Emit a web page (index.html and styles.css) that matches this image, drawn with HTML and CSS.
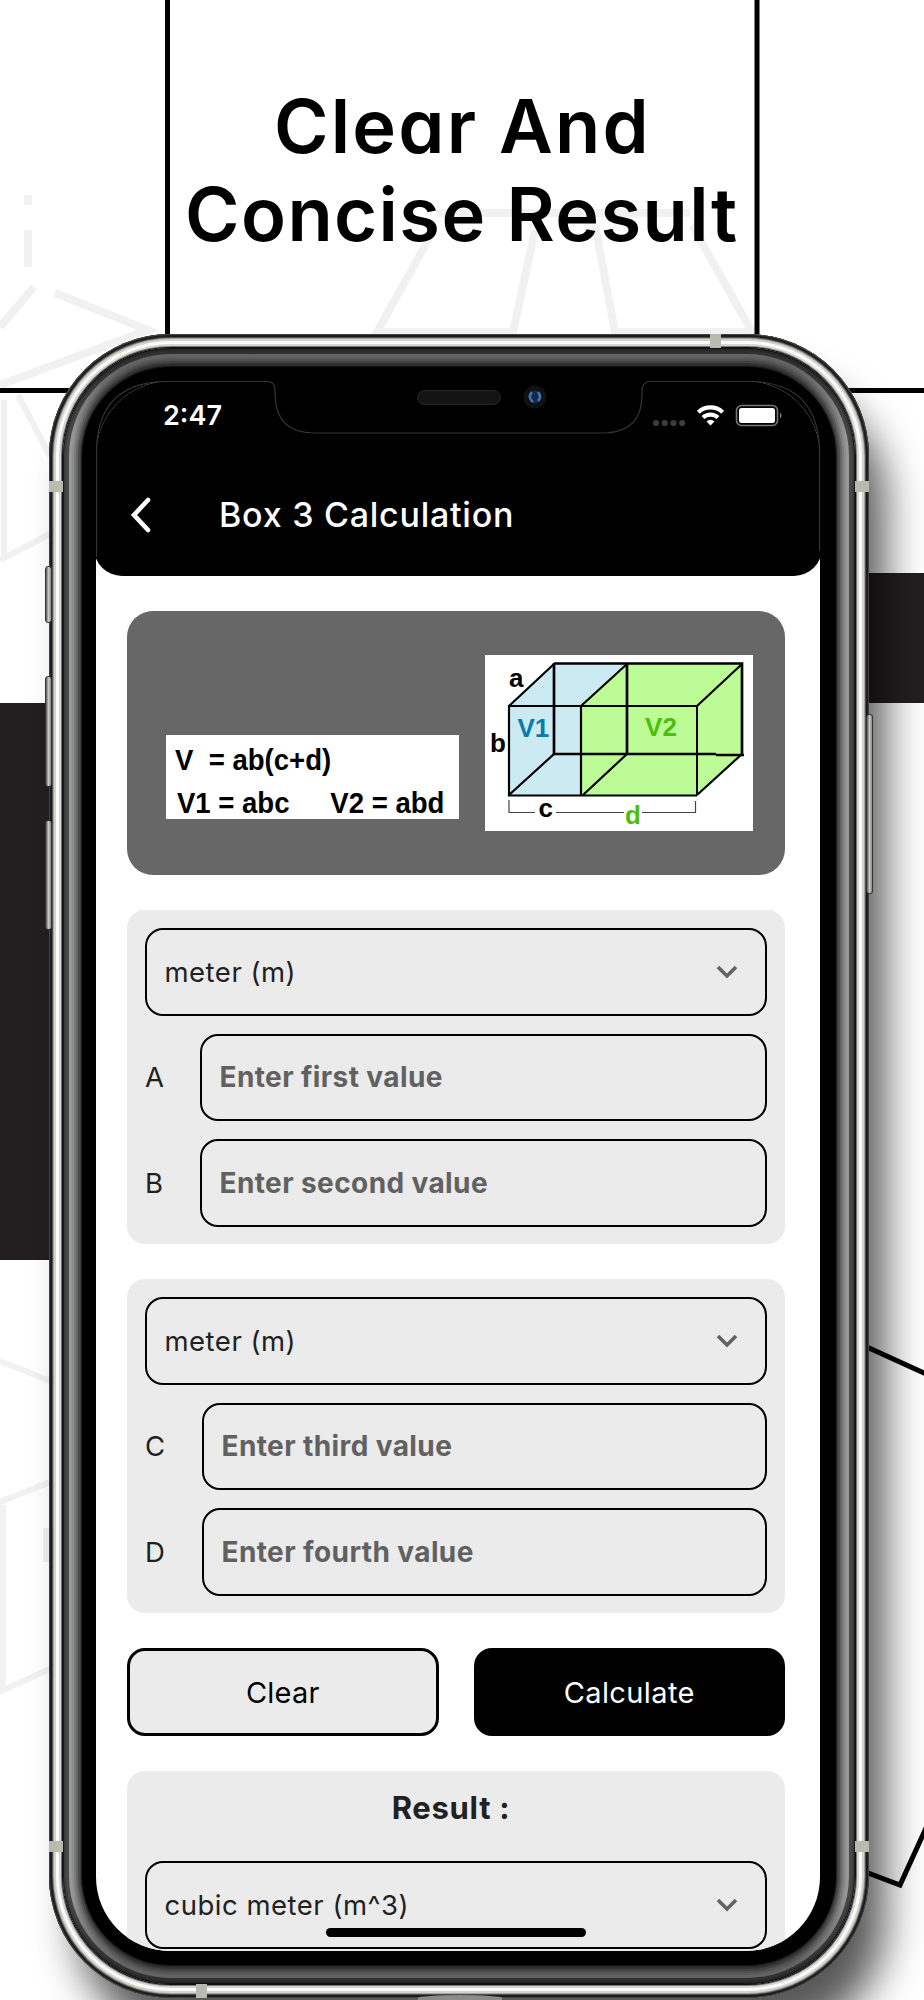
FILE: index.html
```html
<!DOCTYPE html>
<html lang="en">
<head>
    <meta charset="UTF-8">
    <meta name="viewport" content="width=device-width, initial-scale=1.0">
    <title>Box 3 Calculation</title>
    <link rel="stylesheet" href="styles.css">
</head>
<body>
    <div class="poster">
        <!-- background shapes behind the phone -->
        <svg class="backdrop" width="924" height="2000" viewBox="0 0 924 2000">
            <g fill="none" stroke="#f1f1f1" stroke-width="8">
                <path d="M437 213H690M432 233L377 332H513L535 230M595 225L615 332H752L692 225"/>
                <path d="M28 195V205M28 230V267M34 287L0 327M55 293L148 330L0 385"/>
                <path d="M4 400V560M0 560L50 534M18 395L50 456" stroke-width="6"/>
                <path d="M0 1361L50 1381M0 1502L50 1482M3 1505V1690L50 1669M46 1528V1562" stroke-width="6"/>
            </g>
            <path d="M167.5 0V345M757 0V345M0 390.5H924" fill="none" stroke="#000" stroke-width="5"/>
            <rect x="0" y="703" width="60" height="557" fill="#231f20"/>
            <rect x="860" y="573" width="64" height="130" fill="#231f20"/>
        </svg>

        <h1 class="headline">
            <span class="line-one">Clear And</span>
            <span class="line-two">Concise Result</span>
        </h1>

        <div class="phone">
            <span class="key key-mute"></span>
            <span class="key key-up"></span>
            <span class="key key-down"></span>
            <span class="key key-power"></span>
            <span class="band band-lt"></span>
            <span class="band band-rt"></span>
            <span class="band band-lb"></span>
            <span class="band band-rb"></span>
            <span class="band band-top"></span>
            <span class="band band-bottom"></span>
            <span class="port"></span>

            <div class="bezel">
                <div class="screen">
                    <header class="app-header">
                        <div class="status-bar">
                            <span class="time">2:47</span>
                            <svg class="status-icons" width="132" height="24" viewBox="0 0 132 24">
                                <g fill="#3c3c3c">
                                    <circle cx="4" cy="19" r="3.1"/><circle cx="12.7" cy="19" r="3.1"/>
                                    <circle cx="21.5" cy="19" r="3.1"/><circle cx="30.2" cy="19" r="3.1"/>
                                </g>
                                <g fill="none" stroke="#fff" stroke-width="4.2">
                                    <path d="M46.3 8.2A18 18 0 0 1 70.7 8.2"/>
                                    <path d="M51 13.5A11 11 0 0 1 66 13.5"/>
                                </g>
                                <path d="M54.5 17.4A6 6 0 0 1 62.5 17.4L58.5 21.5Z" fill="#fff"/>
                                <rect x="84.5" y="1.5" width="41" height="20" rx="5" fill="none" stroke="#777" stroke-width="1.6"/>
                                <rect x="87" y="4" width="36" height="15" rx="2.5" fill="#fff"/>
                                <path d="M128 8.5Q131 11.5 128 14.5Z" fill="#888"/>
                            </svg>
                        </div>
                        <div class="title-bar">
                            <svg class="back" width="24" height="38" viewBox="0 0 24 38">
                                <path d="M19 4L5 19L19 34" fill="none" stroke="#fff" stroke-width="4.6" stroke-linecap="round"/>
                            </svg>
                            <h2>Box 3 Calculation</h2>
                        </div>
                    </header>

                    <main class="content">
                        <section class="figure-card">
                            <div class="formula">
                                <p>V&nbsp; = ab(c+d)</p>
                                <p class="row-two"><span>V1 = abc</span><span>V2 = abd</span></p>
                            </div>
                            <svg class="diagram" width="268" height="176" viewBox="0 0 268 176">
                                <rect width="268" height="176" fill="#fff"/>
                                <path d="M24 51L69 9H142L96 51V140H24Z" fill="#cbeaf2"/>
                                <path d="M96 51L142 9H257V100L212 140H96Z" fill="#bdfb97"/>
                                <g fill="none" stroke="#000">
                                    <path d="M24 51H212V140" stroke-width="2"/>
                                    <path d="M24 50V140.500H212M96 51V140" stroke-width="2.2"/>
                                    <path d="M69 8.500H257V99M69 8V99H231M231 100H259M142 9V99" stroke-width="2.7"/>
                                    <path d="M24 51L69 9M96 51L142 9M212 51L257 9M24 140L69 99M98 140L142 99M212 140L257 99" stroke-width="2.2"/>
                                    <path d="M24 145V157.500H50M71 157.500H139M157 157.500H210.500V146" stroke-width="1.200" stroke="#444"/>
                                </g>
                                <g class="diagram-text">
                                    <text x="24" y="32">a</text>
                                    <text x="5" y="97">b</text>
                                    <text x="53.500" y="161.500">c</text>
                                    <text x="140" y="169" fill="#4abf0c">d</text>
                                    <text x="32.500" y="82" fill="#087bae">V1</text>
                                    <text x="160" y="80.500" fill="#4abf0c" textLength="32">V2</text>
                                </g>
                            </svg>
                        </section>

                        <section class="panel">
                            <div class="select">
                                <span class="unit">meter (m)</span>
                                <svg class="chevron" width="24" height="16" viewBox="0 0 24 16"><path d="M3 3L12 12L21 3"/></svg>
                            </div>
                            <div class="field">
                                <label class="label-ab">A</label>
                                <div class="input first">Enter first value</div>
                            </div>
                            <div class="field">
                                <label class="label-ab">B</label>
                                <div class="input second">Enter second value</div>
                            </div>
                        </section>

                        <section class="panel">
                            <div class="select">
                                <span class="unit">meter (m)</span>
                                <svg class="chevron" width="24" height="16" viewBox="0 0 24 16"><path d="M3 3L12 12L21 3"/></svg>
                            </div>
                            <div class="field">
                                <label class="label-cd">C</label>
                                <div class="input third">Enter third value</div>
                            </div>
                            <div class="field">
                                <label class="label-cd">D</label>
                                <div class="input fourth">Enter fourth value</div>
                            </div>
                        </section>

                        <div class="actions">
                            <button class="btn btn-clear">Clear</button>
                            <button class="btn btn-calc">Calculate</button>
                        </div>

                        <section class="panel result">
                            <h3>Result :</h3>
                            <div class="select">
                                <span class="unit">cubic meter (m^3)</span>
                                <svg class="chevron" width="24" height="16" viewBox="0 0 24 16"><path d="M3 3L12 12L21 3"/></svg>
                            </div>
                        </section>
                    </main>
                    <span class="home-indicator"></span>
                </div>

                <!-- notch with speaker and camera -->
                <svg class="notch" width="724" height="200" viewBox="0 0 724 200">
                    <path d="M.5 176V72Q.5 .5 72 .5H171Q179 .5 179 9V14Q180 52 218 52H510Q546 50 546 14V9Q547 .5 554 .5H652Q723.500 .5 723.500 72V170" fill="none" stroke="#343434" stroke-width="1.200"/>
                    <rect x="321.500" y="9.500" width="83" height="14" rx="7" fill="#141414" stroke="#262626"/>
                    <circle cx="439" cy="16" r="11.500" fill="#101113"/>
                    <circle cx="439" cy="16" r="6.500" fill="#14284c"/>
                    <path d="M436 11Q431 16 437 21M442 11Q446 16 442 20" fill="none" stroke="#3d78b4" stroke-width="2.500"/>
                </svg>
            </div>
        </div>
    </div>

    <svg class="strokes" width="64" height="560" viewBox="0 0 64 560">
        <path d="M8 6.500L66 33M8 532L40 544L66 487" fill="none" stroke="#000" stroke-width="5"/>
    </svg>
</body>
</html>
```
FILE: styles.css
```css
* {
    box-sizing: border-box;
}
body {
    margin: 0;
    background: #fff;
    font-family: Inter, "Liberation Sans", sans-serif;
    color: #212121;
}
h1, h2, h3, p {
    margin: 0;
}
.poster {
    position: relative;
    width: 924px;
    height: 2000px;
    overflow: hidden;
}
.backdrop {
    position: absolute;
    left: 0;
    top: 0;
}
.strokes {
    position: absolute;
    left: 860px;
    top: 1341px;
    clip-path: inset(0 0 0 9px);
}

/* headline */
.headline {
    position: relative;
    height: 334px;
    padding-top: 82px;
    font-size: 74px;
    font-weight: 580;
    line-height: 88px;
    color: #000;
    font-feature-settings: "cv11";
}
.headline span {
    display: block;
    width: max-content;
    white-space: nowrap;
}
.line-one {
    margin-left: 274px;
    letter-spacing: 2.2px;
}
.line-two {
    margin-left: 185px;
    letter-spacing: 1.4px;
}

/* phone body */
.phone {
    position: relative;
    width: 820px;
    height: 1664px;
    margin-left: 49px;
    padding: 14px;
    border-radius: 122px;
    background: #111;
    box-shadow:
        inset 0 0 0 1px #444,
        inset 0 0 0 3px #1b1c1b,
        inset 0 0 0 4px #50514f,
        inset 0 0 0 5px #a3a39f,
        inset 0 0 0 7px #d4d4cf,
        inset 0 0 0 10px #fbfbfa,
        inset 0 0 0 12px #d5d5d1,
        inset 0 0 0 13px #777,
        22px 46px 42px -6px rgba(0, 0, 0, 0.66);
}
.bezel {
    position: relative;
    height: 1636px;
    padding: 33px;
    border-radius: 108px;
    background: #000;
    box-shadow:
        inset 0 0 0 1px #1c1c1c,
        inset 0 0 0 3px #3c3d3d,
        inset 0 0 0 6px #484949,
        inset 0 0 0 9px #989898,
        inset 0 0 0 11px #8c8c8c,
        inset 0 0 0 13px #7b7b7b,
        inset 0 0 0 15px #666,
        inset 0 0 0 17px #4c4c4c,
        inset 0 0 0 18px #3a3a3a,
        inset 0 0 0 19px #222;
}
/* the rim is darker on the short sides */
.bezel::before {
    content: "";
    position: absolute;
    inset: 0;
    border-radius: 108px;
    background: linear-gradient(rgba(0, 0, 0, 0.35) 20px, transparent 90px, transparent 1546px, rgba(0, 0, 0, 0.35) 1616px);
}
.key {
    position: absolute;
    left: -4px;
    width: 7px;
    border: 1px solid #333;
    border-radius: 3px;
    background: linear-gradient(90deg, #555, #c9cac5 50%, #888);
}
.key-mute {
    top: 232px;
    height: 57px;
}
.key-up {
    top: 342px;
    height: 111px;
}
.key-down {
    top: 486px;
    height: 110px;
}
.key-power {
    left: 817px;
    top: 380px;
    height: 180px;
}
.band {
    position: absolute;
    width: 14px;
    height: 11px;
    background: #b9bab2;
}
.band-lt {
    left: 0;
    top: 147px;
}
.band-rt {
    right: 0;
    top: 147px;
}
.band-lb {
    left: 0;
    top: 1507px;
}
.band-rb {
    right: 0;
    top: 1507px;
}
.band-top {
    left: 661px;
    top: 0;
    width: 11px;
    height: 14px;
}
.band-bottom {
    left: 147px;
    bottom: 0;
    width: 11px;
    height: 14px;
}
.port {
    position: absolute;
    left: 369px;
    bottom: -3px;
    width: 84px;
    height: 6px;
    border-radius: 50% 50% 0 0;
    background: #8b8b88;
}
.notch {
    position: absolute;
    left: 33px;
    top: 33px;
}

/* screen */
.screen {
    position: relative;
    width: 724px;
    height: 1570px;
    overflow: hidden;
    border-radius: 74px;
    background: #fff;
}
.app-header {
    height: 195px;
    margin: 0 -2px;
    border-radius: 0 0 28px 28px;
    background: #000;
    color: #fff;
}
.status-bar {
    display: flex;
    justify-content: space-between;
    padding: 18px 38px 0 69px;
}
.time {
    font-size: 27px;
    font-weight: 600;
    line-height: 34px;
}
.status-icons {
    margin-top: 5px;
}
.title-bar {
    display: flex;
    align-items: center;
    gap: 66px;
    padding: 62px 0 0 35px;
}
.title-bar h2 {
    font-size: 34px;
    font-weight: 500;
    line-height: 40px;
    letter-spacing: 0.75px;
}
.content {
    display: flex;
    flex-direction: column;
    gap: 35px;
    padding: 35px 35px 0 31px;
}
.figure-card {
    display: flex;
    height: 264px;
    padding: 44px 32px 0 39px;
    gap: 26px;
    border-radius: 26px;
    background: #676767;
}
.formula {
    width: 293px;
    height: 84px;
    margin-top: 80px;
    padding: 4px 0 0 9px;
    background: #fff;
    color: #000;
    font-family: "Liberation Sans", Arial, sans-serif;
    font-size: 29px;
    font-weight: bold;
    line-height: 43px;
    white-space: nowrap;
}
.formula p {
    width: 310px;
    transform: scaleX(0.95);
    transform-origin: left;
}
.row-two {
    display: flex;
    gap: 43px;
    padding-left: 2px;
}
.diagram {
    flex: none;
}
.diagram-text {
    font-family: "Liberation Sans", Arial, sans-serif;
    font-size: 26px;
    font-weight: bold;
}
.panel {
    display: flex;
    flex-direction: column;
    gap: 18px;
    height: 334px;
    padding: 18px;
    border-radius: 18px;
    background: #ebebeb;
}
.select,
.input {
    display: flex;
    align-items: center;
    height: 87.5px;
    border: 2px solid #000;
    border-radius: 18px;
}
.select {
    flex: none;
    justify-content: space-between;
    padding: 0 26px 0 17.5px;
}
.unit {
    font-size: 27.5px;
    letter-spacing: 0.5px;
}
.chevron path {
    fill: none;
    stroke: #636363;
    stroke-width: 3.6;
}
.field {
    display: flex;
    align-items: center;
    font-size: 27.5px;
}
.label-ab {
    width: 54.5px;
}
.label-cd {
    width: 56.5px;
}
.input {
    flex: 1;
    padding-left: 18px;
    color: #616161;
    font-size: 28px;
    font-weight: 650;
    letter-spacing: 0.4px;
}
.actions {
    display: flex;
    gap: 35px;
}
.btn {
    flex: 1;
    height: 88px;
    border: 3px solid #000;
    border-radius: 18px;
    background: #ebebeb;
    color: #000;
    font: 400 29px Inter, sans-serif;
    letter-spacing: 0.2px;
}
.btn-calc {
    background: #000;
    color: #fff;
    letter-spacing: 0.4px;
}
.result {
    gap: 35px;
}
.result h3 {
    padding: 0 10px 0 0;
    font-size: 31px;
    font-weight: 650;
    line-height: 37px;
    letter-spacing: 0.7px;
    text-align: center;
}
.home-indicator {
    position: absolute;
    left: 230px;
    bottom: 14px;
    width: 260px;
    height: 9px;
    border-radius: 5px;
    background: #000;
}
```
